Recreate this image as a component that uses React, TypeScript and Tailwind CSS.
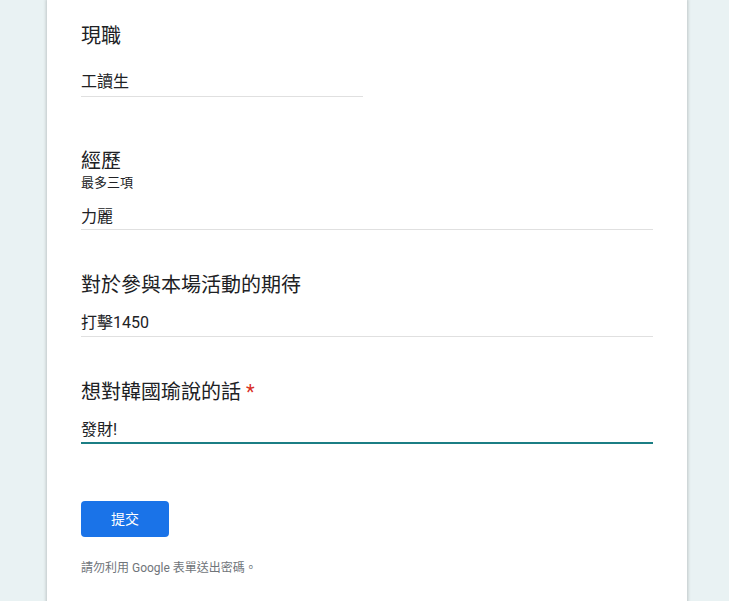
export default function App() {
  return (
    <div
      className="min-h-screen w-full bg-[#e9f2f3] overflow-hidden"
      style={{ fontFamily: 'Roboto, "Noto Sans CJK TC", sans-serif' }}
    >
      <div className="ml-[47px] w-[640px] min-h-[601px] bg-white shadow-[0_0_3px_1px_rgba(0,0,0,0.18)] pl-[34px] pr-[34px] pt-6 pb-10 text-[#202124]">
        {/* 現職 */}
        <div className="text-[20px] leading-6">現職</div>
        <div className="mt-[22px] w-[282px] border-b border-[#e0e0e0] pb-[2px] text-[16px] leading-6">
          工讀生
        </div>

        {/* 經歷 */}
        <div className="mt-[52px] text-[20px] leading-6">經歷</div>
        <div className="text-[13px] leading-5">最多三項</div>
        <div className="mt-[12px] border-b border-[#e0e0e0] text-[16px] leading-6">
          力麗
        </div>

        {/* 期待 */}
        <div className="mt-[43px] text-[20px] leading-6">對於參與本場活動的期待</div>
        <div className="mt-[14px] border-b border-[#e0e0e0] pb-px text-[16px] leading-6">
          打擊1450
        </div>

        {/* 想說的話 */}
        <div className="mt-[43px] text-[20px] leading-6">
          想對韓國瑜說的話 <span className="text-[#d93025]">*</span>
        </div>
        <div className="mt-[14px] border-b-2 border-[#1b7e84] text-[16px] leading-6">
          發財!
        </div>

        <button className="mt-[57px] flex h-9 w-[88px] items-center justify-center rounded bg-[#1a73e8] text-[14px] text-white">
          提交
        </button>

        <div className="mt-[23px] text-[12px] leading-4 text-[#70757a]">
          請勿利用 Google 表單送出密碼。
        </div>
      </div>
    </div>
  );
}
